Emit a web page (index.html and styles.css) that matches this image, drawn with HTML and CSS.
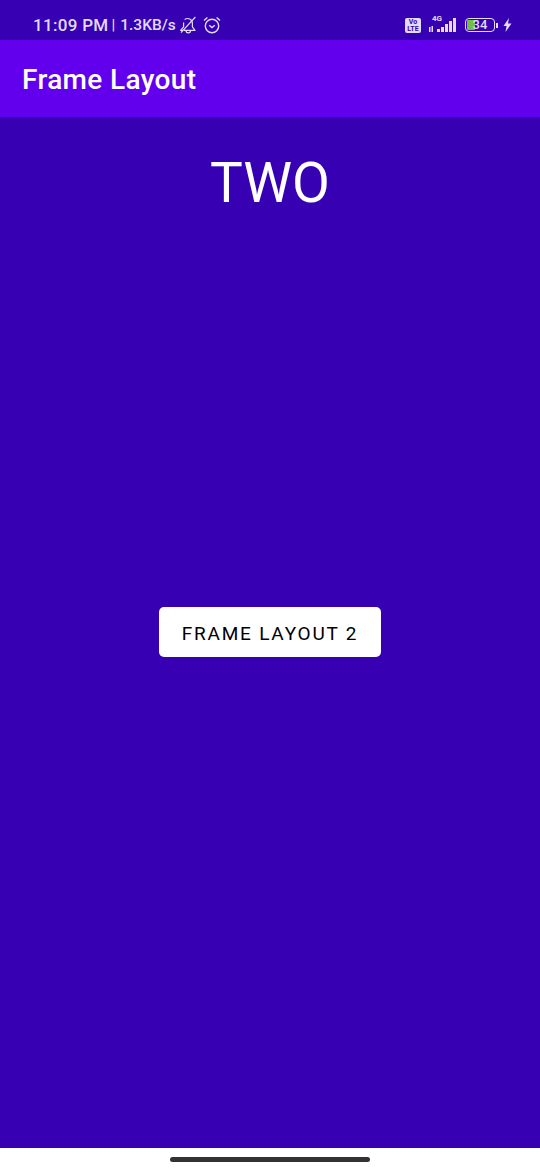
FILE: index.html
```html
<!DOCTYPE html>
<html lang="en">
<head>
  <meta charset="UTF-8">
  <meta name="viewport" content="width=device-width, initial-scale=1.0">
  <title>Frame Layout</title>
  <link rel="stylesheet" href="styles.css">
</head>
<body>
  <div class="status-bar">
    <div class="status-left">
      <span class="status-time">11:09 PM</span>
      <span class="status-sep">|</span>
      <span class="status-speed">1.3KB/s</span>
      <svg class="bell" width="18" height="18" viewBox="0 0 18 18" fill="none" stroke="#e3dbf7" stroke-width="1.2" stroke-linejoin="round">
        <path d="M5.6 3.600A4.800 4.800 0 0 1 13.400 7.400v3.400l2.600 3.600H5"/>
        <path d="M4.600 6.400v4.400l-3 3.600H4"/>
        <path d="M7 14.600c0 3 4.600 3 4.600 0"/>
        <path d="M2 16.600 16.400 1"/>
      </svg>
      <svg class="alarm" width="18" height="18" viewBox="0 0 18 18" fill="none" stroke="#e3dbf7" stroke-width="1.4">
        <circle cx="9" cy="10" r="6.700"/>
        <path d="M6.200 9.200 9 11.600l2.800-2.400"/>
        <path d="M1 4.600 4.400 1.400M17 4.600l-3.400-3.200"/>
      </svg>
    </div>
    <div class="status-right">
      <span class="volte">Vo<br>LTE</span>
      <div class="signal">
        <span class="net">4G</span>
        <svg width="30" height="16" viewBox="0 0 30 16" fill="#e3dbf7">
          <rect x="1" y="10" width="1.500" height="5"/>
          <rect x="3.500" y="9" width="1.500" height="6"/>
          <rect x="9" y="12" width="3" height="3"/>
          <rect x="13" y="10" width="3" height="5"/>
          <rect x="17" y="7" width="3" height="8"/>
          <rect x="21" y="4" width="3" height="11"/>
          <rect x="25" y="1" width="3" height="14"/>
        </svg>
      </div>
      <div class="battery">
        <span class="battery-body"><span class="battery-fill"></span><span class="battery-num">34</span></span>
        <span class="battery-tip"></span>
      </div>
      <svg class="bolt" width="9" height="14" viewBox="0 0 9 14" fill="#e3dbf7">
        <path d="M6 0 .5 8h3l-1 6L8.500 5.600H5z"/>
      </svg>
    </div>
  </div>

  <header class="app-bar">Frame Layout</header>

  <main class="content">
    <div class="big-label">TWO</div>
    <button class="frame-button">FRAME LAYOUT 2</button>
  </main>

  <div class="nav-bar"><span class="nav-handle"></span></div>
</body>
</html>
```

FILE: styles.css
```css
* {
  box-sizing: border-box;
}
html, body {
  margin: 0;
  height: 100%;
}
body {
  width: 540px;
  height: 1170px;
  display: flex;
  flex-direction: column;
  font-family: Roboto, "Liberation Sans", sans-serif;
  background: #3700b3;
  overflow: hidden;
}

.status-bar {
  height: 40px;
  flex: none;
  display: flex;
  justify-content: space-between;
  align-items: center;
  padding: 10px 28px 0 33px;
  background: #3700b3;
  color: #e3dbf7;
}
.status-left {
  display: flex;
  align-items: center;
}
.status-time {
  font-size: 17px;
  font-weight: 500;
  letter-spacing: 0.3px;
}
.status-speed {
  font-size: 15.5px;
  font-weight: 500;
}
.status-sep {
  font-size: 15px;
  font-weight: 500;
  margin: 0 5px 0 3px;
}
.bell {
  margin-left: 3px;
}
.alarm {
  margin-left: 6px;
}
.status-right {
  display: flex;
  align-items: center;
}
.volte {
  width: 16px;
  height: 15px;
  border-radius: 2px;
  background: #e3dbf7;
  color: #3700b3;
  font-size: 7px;
  font-weight: 700;
  line-height: 7px;
  text-align: center;
  padding-top: 1px;
}
.signal {
  position: relative;
  width: 30px;
  height: 16px;
  margin-left: 7px;
}
.net {
  position: absolute;
  left: 4px;
  top: -3px;
  font-size: 8px;
  font-weight: 700;
}
.battery {
  display: flex;
  align-items: center;
  margin-left: 7px;
}
.battery-body {
  position: relative;
  width: 30px;
  height: 14px;
  border: 1.5px solid #e3dbf7;
  border-radius: 4px;
}
.battery-fill {
  position: absolute;
  left: 1px;
  top: 1px;
  bottom: 1px;
  width: 8px;
  background: #6fbf4a;
  border-radius: 1px;
}
.battery-num {
  position: absolute;
  left: 0;
  right: 0;
  top: -1.5px;
  text-align: center;
  font-size: 13px;
  line-height: 14px;
  font-weight: 500;
}
.battery-tip {
  width: 2px;
  height: 5px;
  margin-left: 1px;
  background: #e3dbf7;
}
.bolt {
  margin-left: 5px;
}

.app-bar {
  height: 77px;
  flex: none;
  display: flex;
  align-items: center;
  padding: 2px 0 0 22px;
  background: #6200ee;
  color: #fff;
  font-size: 28px;
  font-weight: 500;
  letter-spacing: 0.35px;
  box-shadow: 0 1px 3px rgba(0, 0, 0, 0.3);
}

.content {
  flex: 1;
  position: relative;
  display: flex;
  flex-direction: column;
  align-items: center;
  background: #3700b3;
}
.big-label {
  margin-top: 33px;
  font-size: 55px;
  line-height: 67px;
  color: #fff;
}
.frame-button {
  margin-top: 390px;
  width: 222px;
  height: 50px;
  padding: 2px 0 0;
  border: none;
  border-radius: 5px;
  background: #fff;
  color: #000;
  font-family: inherit;
  font-size: 19px;
  font-weight: 450;
  letter-spacing: 1.8px;
}

.nav-bar {
  height: 22px;
  flex: none;
  display: flex;
  justify-content: center;
  align-items: center;
  background: #fff;
}
.nav-handle {
  width: 200px;
  height: 5px;
  border-radius: 3px;
  background: #333;
}
```
